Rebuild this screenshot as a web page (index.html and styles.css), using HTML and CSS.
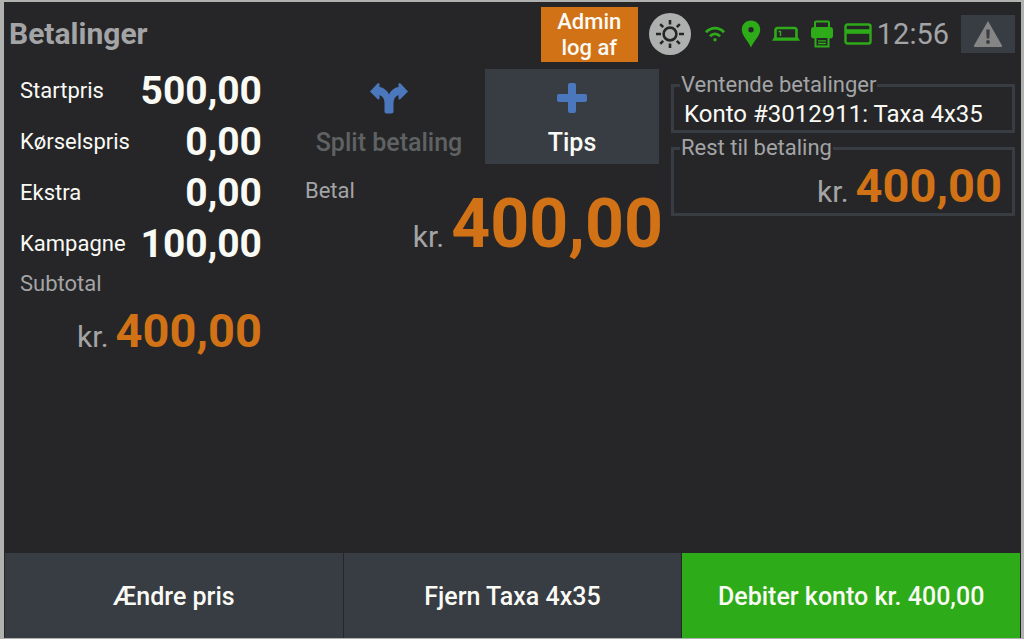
FILE: index.html
```html
<!DOCTYPE html>
<html lang="da">
<head>
<meta charset="utf-8">
<meta name="viewport" content="width=device-width, initial-scale=1">
<title>Betalinger</title>
<link rel="stylesheet" href="styles.css">
</head>
<body>
<div class="screen">
  <header class="topbar">
    <h1 class="title">Betalinger</h1>
    <button class="admin" type="button">Admin<br>log af</button>
    <button class="brightness" type="button" aria-label="Lysstyrke">
      <svg width="30" height="30" viewBox="0 0 30 30" fill="none" stroke="#262628" stroke-width="2.6">
        <circle cx="15" cy="15" r="6.4"/>
        <path d="M15 1v4.500M15 24.500V29M1 15h5M24 15h5M5.200 5.200l3 3M21.800 21.800l3 3M5.200 24.800l3-3M21.800 8.200l3-3"/>
      </svg>
    </button>
    <div class="status">
      <svg width="20" height="16" viewBox="0 0 20 16" fill="none" stroke="#2eab18" stroke-width="2.900">
        <path d="M1 6.300C6 .700 14 .700 19 6.300M5 10.300c3-3 7-3 10 0"/>
        <circle cx="10" cy="13.800" r="1.700" fill="#2eab18" stroke="none"/>
      </svg>
      <svg width="20" height="28" viewBox="0 0 20 28" fill="#2eab18">
        <path fill-rule="evenodd" d="M10 .500C4.600.500.800 4.500.800 9.600.800 15.500 6 19.500 10 27.500c4-8 9.200-12 9.200-17.900C19.200 4.500 15.400.500 10 .500zM10 7a2.700 2.700 0 1 1 0 5.400 2.700 2.700 0 0 1 0-5.400z"/>
      </svg>
      <svg width="28" height="16" viewBox="0 0 28 16" fill="none" stroke="#2eab18">
        <path d="M3.500 12V4.200Q3.500 2 5.700 2H22.300Q24.500 2 24.500 4.200V12" stroke-width="2.600"/>
        <path d="M0 14.800 2 11.500H26L28 14.800z" fill="#2eab18" stroke="none"/>
        <path d="M6.500 5.500h2v4.500" stroke-width="1.400"/>
      </svg>
      <svg width="22" height="28" viewBox="0 0 22 28" fill="none" stroke="#2eab18">
        <path d="M4 8V2.500Q4 1.500 5 1.500H17Q18 1.500 18 2.500V8" stroke-width="2"/>
        <path d="M3 7H19Q22 7 22 10V15.500Q22 18.500 19 18.500H3Q0 18.500 0 15.500V10Q0 7 3 7z" fill="#2eab18" stroke="none"/>
        <path d="M4.500 18V26.500H17.500V18" fill="#262628" stroke-width="2"/>
        <path d="M7 20.800h8M7 23.500h8" stroke-width="1.300"/>
      </svg>
      <svg width="28" height="22" viewBox="0 0 28 22" fill="none" stroke="#2eab18">
        <rect x="1.500" y="1.500" width="25" height="19" rx="2" stroke-width="2.400"/>
        <path d="M1 8.500h26" stroke-width="4.600"/>
        <path d="M3 4.300h22" stroke="#262628" stroke-width="2"/>
      </svg>
    </div>
    <time class="clock">12:56</time>
    <button class="alert" type="button" aria-label="Advarsler">
      <svg width="30" height="28" viewBox="0 0 30 28">
        <path d="M15 1 29 25.500Q29.500 27 28 27H2Q.500 27 1 25.500z" fill="#858585"/>
        <path d="M13.200 9.500h3.600l-.500 9h-2.600z" fill="#3a3d44"/>
        <circle cx="15" cy="22" r="1.900" fill="#3a3d44"/>
      </svg>
    </button>
  </header>

  <main class="content">
    <section class="prices">
      <dl class="lines">
        <div class="line"><dt>Startpris</dt><dd>500,00</dd></div>
        <div class="line"><dt>Kørselspris</dt><dd>0,00</dd></div>
        <div class="line"><dt>Ekstra</dt><dd>0,00</dd></div>
        <div class="line"><dt>Kampagne</dt><dd>100,00</dd></div>
      </dl>
      <h2 class="label">Subtotal</h2>
      <p class="amount subtotal"><span class="currency">kr.</span><strong>400,00</strong></p>
    </section>

    <section class="pay">
      <div class="actions">
        <button class="tile" type="button" disabled>
          <svg width="40" height="32" viewBox="0 0 40 32" fill="#4b78bd">
            <path d="M1 9.500 8.500 1.500Q10.500 0 10.500 2.500V5Q17 6 20 12.500Q23 6 29.500 5V2.500Q29.500 0 31.500 1.500L39 9.500 31.500 17Q29.500 18.500 29.500 16V13Q24.500 15 24.500 21V29.500Q24.500 31.500 22.500 31.500H17.500Q15.500 31.500 15.500 29.500V21Q15.500 15 10.500 13V16Q10.500 18.500 8.500 17z"/>
          </svg>
          <span>Split betaling</span>
        </button>
        <button class="tile tips" type="button">
          <svg width="32" height="32" viewBox="0 0 32 32" fill="#4b78bd">
            <rect x="12" y="1" width="8" height="30" rx="2"/>
            <rect x="1" y="12" width="30" height="8" rx="2"/>
          </svg>
          <span>Tips</span>
        </button>
      </div>
      <h2 class="label">Betal</h2>
      <p class="amount total"><span class="currency">kr.</span><strong>400,00</strong></p>
    </section>

    <section class="pending">
      <fieldset class="box">
        <legend>Ventende betalinger</legend>
        <p class="account">Konto #3012911: Taxa 4x35</p>
      </fieldset>
      <fieldset class="box">
        <legend>Rest til betaling</legend>
        <p class="amount rest"><span class="currency">kr.</span><strong>400,00</strong></p>
      </fieldset>
    </section>
  </main>

  <footer class="footer">
    <button class="command" type="button">Ændre pris</button>
    <button class="command" type="button">Fjern Taxa 4x35</button>
    <button class="command confirm" type="button">Debiter konto kr. 400,00</button>
  </footer>
</div>
</body>
</html>
```
FILE: styles.css
```css
* {
  box-sizing: border-box;
}

body {
  margin: 0;
  min-height: 100vh;
  padding: 2px 3px 1px 4px;
  display: flex;
  background: #b0b2b0;
  font-family: Roboto, "Liberation Sans", sans-serif;
  font-size: 22px;
  line-height: 28px;
  color: #fafaf5;
}

h1, h2, p, dl, dd {
  margin: 0;
}

button {
  border: 0;
  padding: 0;
  font: inherit;
  color: inherit;
  display: flex;
  align-items: center;
  justify-content: center;
}

svg {
  display: block;
  flex: none;
}

.screen {
  flex: 1;
  display: flex;
  flex-direction: column;
  background: #262628;
}

.topbar {
  display: flex;
  align-items: center;
  height: 64px;
  padding: 0 6px 0 5px;
}

.title {
  flex: 1;
  font-size: 30px;
  line-height: 36px;
  font-weight: 700;
  color: #a3a4a5;
}

.admin {
  width: 97px;
  height: 55px;
  padding-top: 2px;
  background: #d27216;
  font-weight: 500;
  line-height: 26px;
}

.brightness {
  width: 42px;
  height: 42px;
  margin: 0 14px 0 11px;
  border-radius: 50%;
  background: #aeb0af;
}

.status {
  display: flex;
  align-items: center;
  gap: 0 11px;
}

.status svg:first-child {
  margin-right: 5px;
}

.clock {
  margin: 0 12px 0 5px;
  font-size: 29px;
  line-height: 36px;
  color: #a3a4a5;
}

.alert {
  width: 54px;
  height: 38px;
  background: #383c43;
}

.content {
  flex: 1;
  display: grid;
  grid-template-columns: 242fr 401fr 352fr;
  padding: 0 6px 0 16px;
}

.line {
  display: flex;
  align-items: center;
  justify-content: space-between;
  height: 51px;
}

.lines {
  margin-top: -1px;
}

.line dd {
  font-size: 39px;
  font-weight: 700;
}

.label {
  font-size: 22px;
  font-weight: 400;
  color: #a3a4a5;
}

.prices .label {
  margin-top: 1px;
}

.amount {
  display: flex;
  align-items: baseline;
  justify-content: flex-end;
  gap: 7px;
}

.amount strong {
  font-weight: 700;
  color: #d27216;
}

.currency {
  font-size: 30px;
  color: #a3a4a5;
}

.subtotal strong {
  font-size: 47px;
  line-height: 56px;
}

.rest strong {
  font-size: 47px;
  line-height: 48px;
}

.total strong {
  font-size: 68px;
  line-height: 72px;
}

.subtotal {
  margin-top: 5px;
}

.pay {
  margin: 3px 0 0 40px;
}

.pay .label {
  margin: 13px 0 0 3px;
}

.total {
  margin-top: -17px;
}

.actions {
  display: grid;
  grid-template-columns: 1fr 1fr;
  gap: 9px;
  margin-right: 4px;
}

.tile {
  flex-direction: column;
  gap: 15px;
  height: 95px;
  padding-top: 5px;
  font-size: 25px;
  font-weight: 500;
  background: transparent;
}

.tile:disabled {
  color: #5f6263;
}

.tile.tips {
  background: #383c43;
}

.pending {
  display: flex;
  flex-direction: column;
  gap: 1px;
  margin-left: 8px;
  padding-top: 5px;
}

.box {
  min-width: 0;
  margin: 0;
  padding: 0 10px;
  border: 3px solid #383c43;
}

.box legend {
  margin-left: -4px;
  padding: 0 1px;
  line-height: 28px;
  color: #a3a4a5;
}

.account {
  font-size: 24px;
  line-height: 31px;
}

.rest {
  padding-bottom: 3px;
}

.footer {
  display: grid;
  grid-template-columns: repeat(3, 1fr);
  gap: 1px;
  padding: 0 1px;
}

.command {
  height: 85px;
  padding-top: 3px;
  background: #383c43;
  font-size: 25px;
  font-weight: 500;
}

.confirm {
  background: #2eab18;
}
```
